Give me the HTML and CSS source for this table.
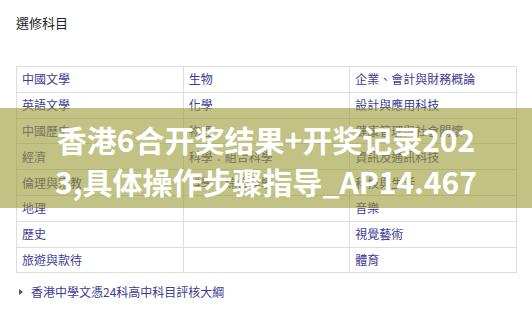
FILE: index.html
```html
<!DOCTYPE html>
<html lang="zh-Hant">
<head>
<meta charset="utf-8">
<link rel="stylesheet" href="styles.css">
</head>
<body>
<div class="page">
  <h3 class="title">選修科目</h3>
  <table class="subjects">
    <tr><td>中國文學</td><td>生物</td><td>企業、會計與財務概論</td></tr>
    <tr><td>英語文學</td><td>化學</td><td>設計與應用科技</td></tr>
    <tr><td>中國歷史</td><td>物理</td><td>健康管理與社會關懷</td></tr>
    <tr><td>經濟</td><td>科學：組合科學</td><td>資訊及通訊科技</td></tr>
    <tr><td>倫理與宗教</td><td>科學：綜合科學</td><td>科技與生活</td></tr>
    <tr><td>地理</td><td></td><td>音樂</td></tr>
    <tr><td>歷史</td><td></td><td>視覺藝術</td></tr>
    <tr><td>旅遊與款待</td><td></td><td>體育</td></tr>
  </table>
  <div class="more"><span class="tri"></span><a class="more-link">香港中學文憑24科高中科目評核大綱</a></div>
</div>
<div class="banner">
  <div class="banner-text">香港6合开奖结果+开奖记录202<br>3,具体操作步骤指导_AP14.467</div>
</div>
</body>
</html>
```
FILE: styles.css
```css
html, body {
  margin: 0;
  padding: 0;
  background: #ffffff;
}
body {
  width: 532px;
  height: 319px;
  overflow: hidden;
  position: relative;
  font-family: "Noto Sans CJK TC", "Noto Sans", sans-serif;
}
.page {
  padding: 14px 15px 0 16px;
}
.title {
  margin: 0;
  font-size: 13px;
  line-height: 18px;
  font-weight: normal;
  color: #222222;
}
.subjects {
  margin-top: 34px;
  width: 501px;
  border-collapse: collapse;
  table-layout: fixed;
  border: 1px solid #dddddd;
}
.subjects td {
  border: 1px solid #dddddd;
  height: 24.8px;
  padding: 0 5px;
  font-size: 12px;
  line-height: 14px;
  color: #3c3c92;
  vertical-align: middle;
  white-space: nowrap;
}
.more {
  margin-top: 12px;
  display: flex;
  align-items: center;
  gap: 0;
  height: 14px;
}
.tri {
  width: 0;
  height: 0;
  border-top: 3.5px solid transparent;
  border-bottom: 3.5px solid transparent;
  border-left: 4px solid #555555;
  margin-left: 3px;
  margin-right: 8px;
}
.more-link {
  font-size: 12px;
  line-height: 14px;
  color: #3c3c92;
  text-decoration: none;
}
.banner {
  position: absolute;
  left: 0;
  top: 108px;
  width: 532px;
  height: 100px;
  background: rgba(153, 153, 51, 0.6);
  display: flex;
  align-items: center;
  justify-content: center;
}
.banner-text {
  font-family: "Noto Sans CJK SC", "Noto Sans", sans-serif;
  font-weight: bold;
  font-size: 30px;
  line-height: 42px;
  color: #ffffff;
  text-align: center;
  margin-top: 4px;
}
```
